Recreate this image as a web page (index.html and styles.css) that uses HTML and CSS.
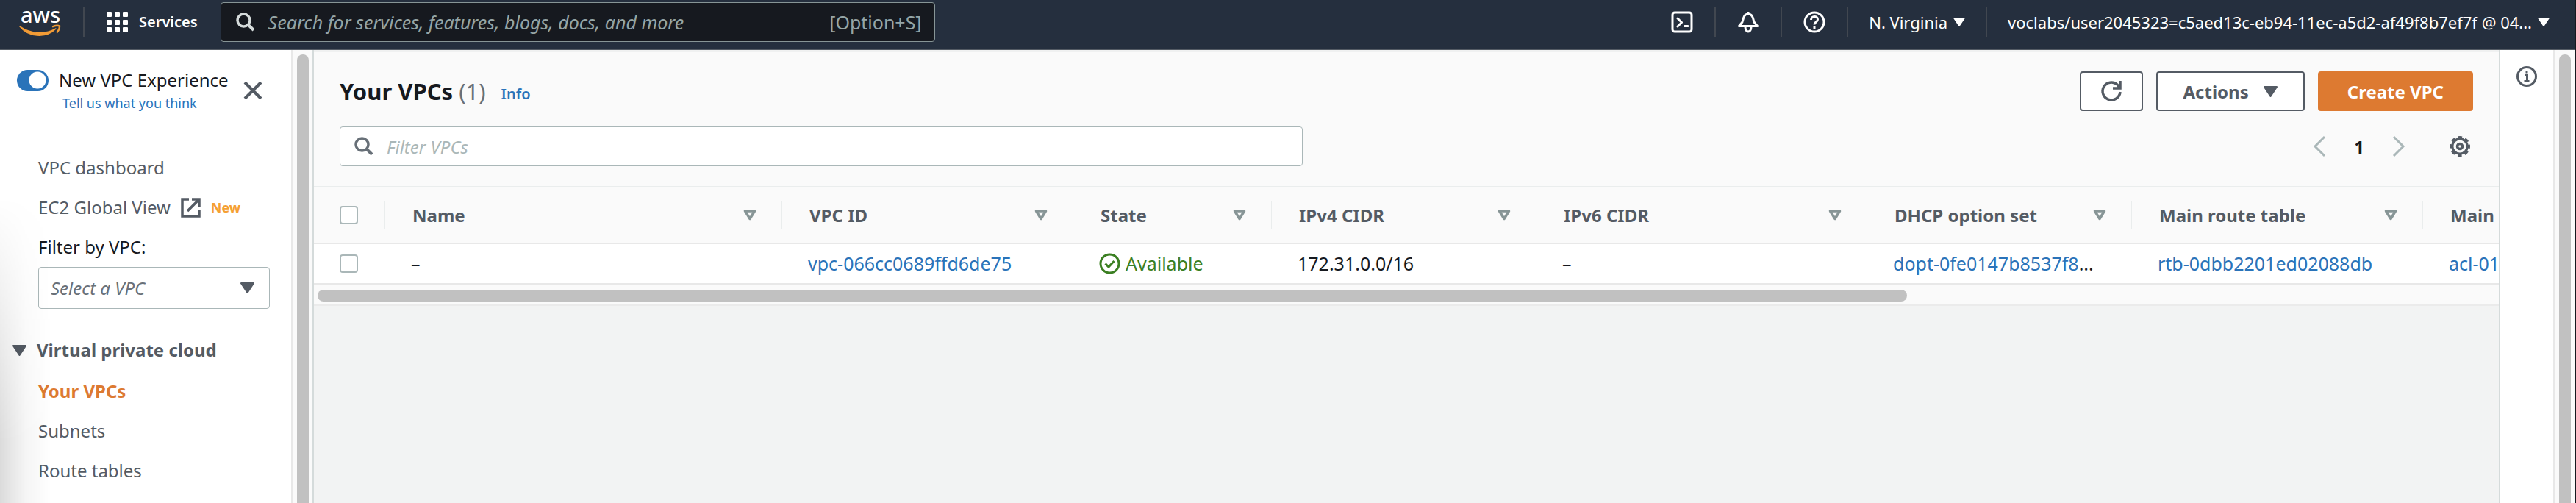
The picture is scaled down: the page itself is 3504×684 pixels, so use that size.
FILE: index.html
```html
<!DOCTYPE html>
<html lang="en">
<head>
<meta charset="utf-8">
<title>Your VPCs | VPC Management Console</title>
<link rel="stylesheet" href="styles.css">
</head>
<body>
<svg class="defs" width="0" height="0" aria-hidden="true">
  <symbol id="search" viewBox="0 0 26 26"><circle cx="10.500" cy="10.500" r="8.500" fill="none" stroke="currentColor" stroke-width="3.500"/><path d="M16.500 16.500L24 24" stroke="currentColor" stroke-width="4"/></symbol>
  <symbol id="caret" viewBox="0 0 18 14"><path d="M1 1h16L9 13z" fill="currentColor" stroke="currentColor" stroke-width="2" stroke-linejoin="round"/></symbol>
  <symbol id="sort" viewBox="0 0 18 15"><path d="M2.500 2h13L9 12.500z" fill="none" stroke="currentColor" stroke-width="3.500" stroke-linejoin="round"/></symbol>
</svg>
<div class="page">
  <header class="topnav">
    <a class="logo" href="#" aria-label="AWS home">
      <svg width="58" height="38" viewBox="0 0 58 38"><text x="2" y="20" class="logo-text">aws</text><path d="M1 25c15 10 33 12 49 3-14 14-38 11-49-3z" fill="#f19b36" stroke="#f19b36" stroke-width="1.500" stroke-linejoin="round"/><path d="M45 25.500c4-2 8-2 10-1 0 3-1 6-4 9" fill="none" stroke="#f19b36" stroke-width="2.500"/></svg>
    </a>
    <span class="rule rule-logo"></span>
    <button class="nav-button services" type="button">
      <svg width="30" height="30" viewBox="0 0 30 30" fill="#fff"><rect x="0" y="1" width="7" height="7" rx="1"/><rect x="11" y="1" width="7" height="7" rx="1"/><rect x="22" y="1" width="7" height="7" rx="1"/><rect x="0" y="12" width="7" height="7" rx="1"/><rect x="11" y="12" width="7" height="7" rx="1"/><rect x="22" y="12" width="7" height="7" rx="1"/><rect x="0" y="22" width="7" height="7" rx="1"/><rect x="11" y="22" width="7" height="7" rx="1"/><rect x="22" y="22" width="7" height="7" rx="1"/></svg>
      Services
    </button>
    <label class="global-search">
      <svg width="26" height="26"><use href="#search"/></svg>
      <input type="search" aria-label="Search" placeholder="Search for services, features, blogs, docs, and more">
      <kbd>[Option+S]</kbd>
    </label>
    <div class="nav-tools">
      <button class="nav-button icon-button" type="button" aria-label="CloudShell"><svg width="30" height="30" viewBox="0 0 30 30" fill="none" stroke="#fff" stroke-width="3" stroke-linecap="round" stroke-linejoin="round"><rect x="2" y="2" width="26" height="26" rx="3"/><path d="M9 10l5.500 5.500L9 21M18.500 20.500h4.500"/></svg></button>
      <span class="rule"></span>
      <button class="nav-button icon-button" type="button" aria-label="Notifications"><svg width="30" height="30" viewBox="0 0 30 30" fill="none" stroke="#fff" stroke-width="3" stroke-linejoin="round"><path d="M15 1v4M2.500 20.500h25l-4.500-5.500c-1.500-6-2.500-11-8-11s-6.500 5-8 11z"/><path d="M11 21.500c0 8.500 8 8.500 8 0"/></svg></button>
      <span class="rule"></span>
      <button class="nav-button icon-button" type="button" aria-label="Help"><svg width="30" height="30" viewBox="0 0 30 30" fill="none" stroke="#fff" stroke-width="3"><circle cx="15" cy="15" r="13"/><path d="M10.500 12c0-6 9-6 9-.5 0 3.500-4.500 3-4.500 7"/><path d="M15 20.500v3.500"/></svg></button>
      <span class="rule"></span>
      <button class="nav-button menu-button" type="button">N. Virginia <svg width="16" height="12"><use href="#caret"/></svg></button>
      <span class="rule"></span>
      <button class="nav-button menu-button" type="button">voclabs/user2045323=c5aed13c-eb94-11ec-a5d2-af49f8b7ef7f @ 04... <svg width="16" height="12"><use href="#caret"/></svg></button>
    </div>
  </header>

  <div class="body">
    <nav class="sidebar" aria-label="VPC">
      <div class="experience">
        <input class="toggle" id="experience" type="checkbox" role="switch" checked>
        <div class="experience-text">
          <label for="experience">New VPC Experience</label>
          <a href="#">Tell us what you think</a>
        </div>
        <button class="close" type="button" aria-label="Close"><svg width="26" height="26" viewBox="0 0 26 26" stroke="#545b64" stroke-width="4"><path d="M2 2l22 22M24 2L2 24"/></svg></button>
      </div>
      <div class="nav-list">
        <a href="#">VPC dashboard</a>
        <a href="#" class="external">EC2 Global View <svg width="27" height="27" viewBox="0 0 27 27" fill="none" stroke="#545b64" stroke-width="3.500"><path d="M11 2H2v23h23v-9M15 2h10v10M24.500 2.500L9 18"/></svg> <b>New</b></a>
        <label for="vpc-filter">Filter by VPC:</label>
      </div>
      <div class="select">
        <select id="vpc-filter"><option>Select a VPC</option></select>
        <svg width="19" height="15"><use href="#caret"/></svg>
      </div>
      <button class="section" type="button"><svg width="19" height="15"><use href="#caret"/></svg>Virtual private cloud</button>
      <div class="nav-list nav-section">
        <a href="#" class="current" aria-current="page">Your VPCs</a>
        <a href="#">Subnets</a>
        <a href="#">Route tables</a>
      </div>
      <div class="edge-shade"></div>
    </nav>
    <div class="scroll-track"><div class="scroll-thumb"></div></div>

    <main class="content">
      <section class="panel">
        <div class="panel-head">
          <div class="title-row">
            <h1>Your VPCs <span>(1)</span></h1>
            <a class="info-link" href="#">Info</a>
            <div class="actions">
              <button class="button refresh" type="button" aria-label="Refresh"><svg width="30" height="30" viewBox="0 0 30 30" fill="none" stroke="#545b64" stroke-width="3.500"><path d="M27 16a12 12 0 1 1-4-10l3 4M27 1v10H17"/></svg></button>
              <button class="button" type="button">Actions <svg width="19" height="15"><use href="#caret"/></svg></button>
              <button class="button primary" type="button">Create VPC</button>
            </div>
          </div>
          <div class="filter-row">
            <label class="filter">
              <svg width="26" height="26"><use href="#search"/></svg>
              <input type="search" aria-label="Filter VPCs" placeholder="Filter VPCs">
            </label>
            <div class="pager">
              <button type="button" aria-label="Previous page"><svg width="18" height="28" viewBox="0 0 18 28" fill="none" stroke="#aab7b8" stroke-width="3"><path d="M16 1L3 14l13 13"/></svg></button>
              <span class="page-number">1</span>
              <button type="button" aria-label="Next page"><svg width="18" height="28" viewBox="0 0 18 28" fill="none" stroke="#aab7b8" stroke-width="3"><path d="M2 1l13 13L2 27"/></svg></button>
            </div>
            <div class="settings">
              <button type="button" aria-label="Preferences"><svg width="30" height="30" viewBox="0 0 30 30" fill="none" stroke="#545b64"><circle cx="15" cy="15" r="10.200" stroke-width="3.200"/><circle cx="15" cy="15" r="12.500" stroke-width="3" stroke-dasharray="5.500 4.317" stroke-dashoffset="2.750"/><circle cx="15" cy="15" r="3.500" stroke-width="3.500"/></svg></button>
            </div>
          </div>
        </div>
        <div class="table-wrap">
          <table>
            <colgroup><col class="c-check"><col class="c-540"><col class="c-396"><col class="c-270"><col class="c-360"><col class="c-450"><col class="c-360"><col class="c-396"><col class="c-396"></colgroup>
            <thead>
              <tr>
                <th><input type="checkbox" aria-label="Select all"></th>
                <th><div>Name <svg width="18" height="15"><use href="#sort"/></svg></div></th>
                <th><div>VPC ID <svg width="18" height="15"><use href="#sort"/></svg></div></th>
                <th><div>State <svg width="18" height="15"><use href="#sort"/></svg></div></th>
                <th><div>IPv4 CIDR <svg width="18" height="15"><use href="#sort"/></svg></div></th>
                <th><div>IPv6 CIDR <svg width="18" height="15"><use href="#sort"/></svg></div></th>
                <th><div>DHCP option set <svg width="18" height="15"><use href="#sort"/></svg></div></th>
                <th><div>Main route table <svg width="18" height="15"><use href="#sort"/></svg></div></th>
                <th><div>Main network ACL</div></th>
              </tr>
            </thead>
            <tbody>
              <tr>
                <td><input type="checkbox" aria-label="Select vpc-066cc0689ffd6de75"></td>
                <td>–</td>
                <td><a href="#">vpc-066cc0689ffd6de75</a></td>
                <td><span class="status"><svg width="29" height="29" viewBox="0 0 29 29" fill="none" stroke="#3b7f22" stroke-width="3"><circle cx="14.500" cy="14.500" r="12.500"/><path d="M8.500 14.500l4.500 4.500 7.500-8"/></svg>Available</span></td>
                <td>172.31.0.0/16</td>
                <td>–</td>
                <td><a href="#">dopt-0fe0147b8537f8</a>...</td>
                <td><a href="#">rtb-0dbb2201ed02088db</a></td>
                <td><a href="#">acl-01</a></td>
              </tr>
            </tbody>
          </table>
        </div>
        <div class="h-track"><div class="h-thumb"></div></div>
      </section>
    </main>

    <aside class="help-rail">
      <button type="button" aria-label="Open help panel"><svg width="30" height="30" viewBox="0 0 30 30" fill="none" stroke="#545b64" stroke-width="3"><circle cx="15" cy="15" r="12.500"/><path d="M15 7v3.500M12 13.500h3.500V21M11.500 21.500h7"/></svg></button>
    </aside>
    <div class="scroll-track rail-track"><div class="scroll-thumb"></div></div>
  </div>
</div>
</body>
</html>
```
FILE: styles.css
```css
* { box-sizing: border-box; }
body {
  margin: 0;
  font-family: "Noto Sans", "Open Sans", sans-serif;
  font-size: 24px;
  color: #16191f;
  background: #fff;
}
button, input, select { font: inherit; color: inherit; }
button { padding: 0; border: 0; background: none; }
a { color: #2a73b9; text-decoration: none; }
svg { display: block; flex: none; overflow: visible; }
input::placeholder { opacity: 1; }
.defs { position: absolute; }
.page {
  display: flex;
  flex-direction: column;
  height: 100vh;
  overflow: hidden;
  border-right: 2px solid #16191f;
}

/* top navigation */
.topnav {
  display: flex;
  align-items: center;
  flex: none;
  height: 68px;
  padding: 0 34px 8px 26px;
  background: #252f3e;
  border-bottom: 1px solid #545b64;
  box-shadow: inset 0 -1px #fff;
  color: #fff;
  font-size: 22px;
}
.logo-text { font-size: 29px; font-weight: 500; fill: #fff; }
.rule { width: 2px; height: 40px; background: #414750; }
.rule-logo { margin: 0 30px 0 29px; }
.nav-button { display: flex; align-items: center; white-space: nowrap; }
.services { gap: 14px; font-size: 20px; font-weight: 600; }
.global-search {
  display: flex;
  align-items: center;
  gap: 18px;
  flex: 0 1 972px;
  height: 54px;
  margin-left: 31px;
  padding: 0 17px 0 20px;
  background: #16191f;
  border: 1px solid #879596;
  border-radius: 4px;
  color: #d5dbdb;
  font-size: 25px;
}
.global-search input { flex: 1; min-width: 0; padding: 0; border: 0; outline: 0; background: none; }
.global-search input::placeholder { color: #95a5a6; font-style: italic; }
.global-search kbd { font: inherit; color: #95a5a6; }
.nav-tools { display: flex; align-items: center; margin-left: auto; }
.icon-button { width: 88px; justify-content: center; }
.menu-button { gap: 8px; padding: 0 28px; }
.menu-button:last-child { padding-right: 0; }

/* page columns */
.body { display: flex; flex: 1; min-height: 0; }
.sidebar { position: relative; flex: none; width: 396px; }
.scroll-track {
  flex: none;
  width: 31px;
  padding: 6px 0 0 6px;
  background: #fafafa;
  border-left: 2px solid #e8e8e8;
  border-right: 2px solid #d5dbdb;
}
.scroll-thumb { width: 16px; height: 100%; background: #c1c1c1; border-radius: 8px 8px 0 0; }
.rail-track { width: 29px; border-right: 0; }

/* sidebar */
.experience {
  display: flex;
  align-items: flex-start;
  height: 104px;
  padding: 24px 0 0 23px;
  border-bottom: 1px solid #eaeded;
}
.toggle {
  appearance: none;
  width: 43px;
  height: 29px;
  margin: 3px 14px 0 0;
  border-radius: 15px;
  background: radial-gradient(circle at 28px 14px, #fff 11px, #2a73b9 12px);
}
.experience-text { display: flex; flex-direction: column; line-height: 34px; white-space: nowrap; }
.experience-text a { padding-left: 5px; font-size: 18px; line-height: 28px; }
.close { margin: 18px 0 0 20px; }
.nav-list { display: flex; flex-direction: column; padding: 29px 29px 0 52px; line-height: 54px; }
.nav-list a { color: #545b64; }
.nav-list .current { color: #dd7a31; font-weight: 700; }
.external { display: flex; align-items: center; gap: 14px; }
.external b { font-size: 18px; color: #f5a033; }
.select { position: relative; margin: 0 29px 0 52px; }
.select select {
  appearance: none;
  display: block;
  width: 100%;
  height: 57px;
  padding: 0 16px;
  border: 1px solid #aab7b8;
  border-radius: 4px;
  background: #fff;
  color: #687078;
  font-style: italic;
}
.select svg { position: absolute; right: 21px; top: 21px; color: #545b64; pointer-events: none; }
.section {
  display: flex;
  align-items: center;
  gap: 14px;
  margin: 39px 0 0 17px;
  line-height: 34px;
  color: #545b64;
  font-weight: 700;
}
.nav-section { padding-top: 12px; }
.edge-shade {
  position: absolute;
  inset: 200px auto 0 0;
  width: 70px;
  background: linear-gradient(to right, rgba(0, 0, 0, 0.14), rgba(0, 0, 0, 0.04) 50%, transparent);
  mask-image: linear-gradient(transparent, #000 80%);
  pointer-events: none;
}

/* main panel */
.content { flex: 1; min-width: 0; background: #f2f3f3; }
.panel { background: #fafafa; border-top: 3px solid #f0f1f1; }
.panel-head { padding: 26px 35px 27px; }
.title-row { display: flex; align-items: center; height: 54px; }
h1 { margin: 0; font-size: 31px; font-weight: 700; }
h1 span { color: #687078; font-weight: 400; }
.info-link { padding: 6px 0 0 21px; font-size: 20px; font-weight: 600; }
.actions { display: flex; gap: 18px; margin-left: auto; }
.button {
  display: flex;
  align-items: center;
  justify-content: center;
  gap: 20px;
  height: 54px;
  padding: 0 35px;
  border: 2px solid #545b64;
  border-radius: 4px;
  background: #fff;
  color: #545b64;
  font-size: 24px;
  font-weight: 700;
}
.refresh { padding: 0 26px; }
.primary { padding: 0 38px; border-color: #dd7a31; background: #dd7a31; color: #fff; }
.filter-row { display: flex; align-items: center; margin-top: 21px; }
.filter {
  display: flex;
  align-items: center;
  gap: 18px;
  flex: 0 1 1310px;
  height: 54px;
  padding: 0 19px;
  border: 1px solid #aab7b8;
  border-radius: 4px;
  background: #fff;
  color: #687078;
}
.filter input { flex: 1; min-width: 0; padding: 0; border: 0; outline: 0; background: none; }
.filter input::placeholder { color: #aab7b8; font-style: italic; }
.pager { display: flex; align-items: center; gap: 38px; margin-left: auto; }
.page-number { font-size: 24px; font-weight: 700; }
.settings {
  display: flex;
  align-items: center;
  height: 54px;
  margin-left: 26px;
  padding: 0 3px 0 32px;
  border-left: 1px solid #eaeded;
}

/* table */
.table-wrap { overflow: hidden; border-top: 1px solid #eaeded; border-bottom: 3px solid #e8e8e8; }
table { width: 3264px; border-collapse: collapse; table-layout: fixed; }
.c-check { width: 96px; }
.c-270 { width: 270px; }
.c-360 { width: 360px; }
.c-396 { width: 396px; }
.c-450 { width: 450px; }
.c-540 { width: 540px; }
th { height: 77px; padding: 0; text-align: left; font-size: 24px; color: #545b64; border-bottom: 1px solid #e8e8e8; white-space: nowrap; }
th div {
  display: flex;
  align-items: center;
  justify-content: space-between;
  height: 38px;
  padding: 0 34px 0 37px;
  border-left: 1px solid #eaeded;
}
th svg { color: #879596; }
td { height: 54px; padding: 0 0 0 36px; background: #fff; font-size: 25px; line-height: 34px; white-space: nowrap; }
th:first-child, td:first-child { padding-left: 35px; }
table input {
  appearance: none;
  display: block;
  width: 25px;
  height: 25px;
  margin: 0;
  border: 2px solid #aab7b8;
  border-radius: 4px;
  background: #fff;
}
.status { display: flex; align-items: center; gap: 7px; color: #3b7f22; }
.h-track { height: 28px; padding: 6px 5px; border-bottom: 2px solid #ebebeb; }
.h-thumb { width: 73%; height: 16px; border-radius: 8px; background: #c1c1c1; }

.help-rail { display: flex; justify-content: center; flex: none; width: 74px; padding-top: 21px; border-left: 2px solid #d5dbdb; }
.help-rail button { align-self: flex-start; }
```
